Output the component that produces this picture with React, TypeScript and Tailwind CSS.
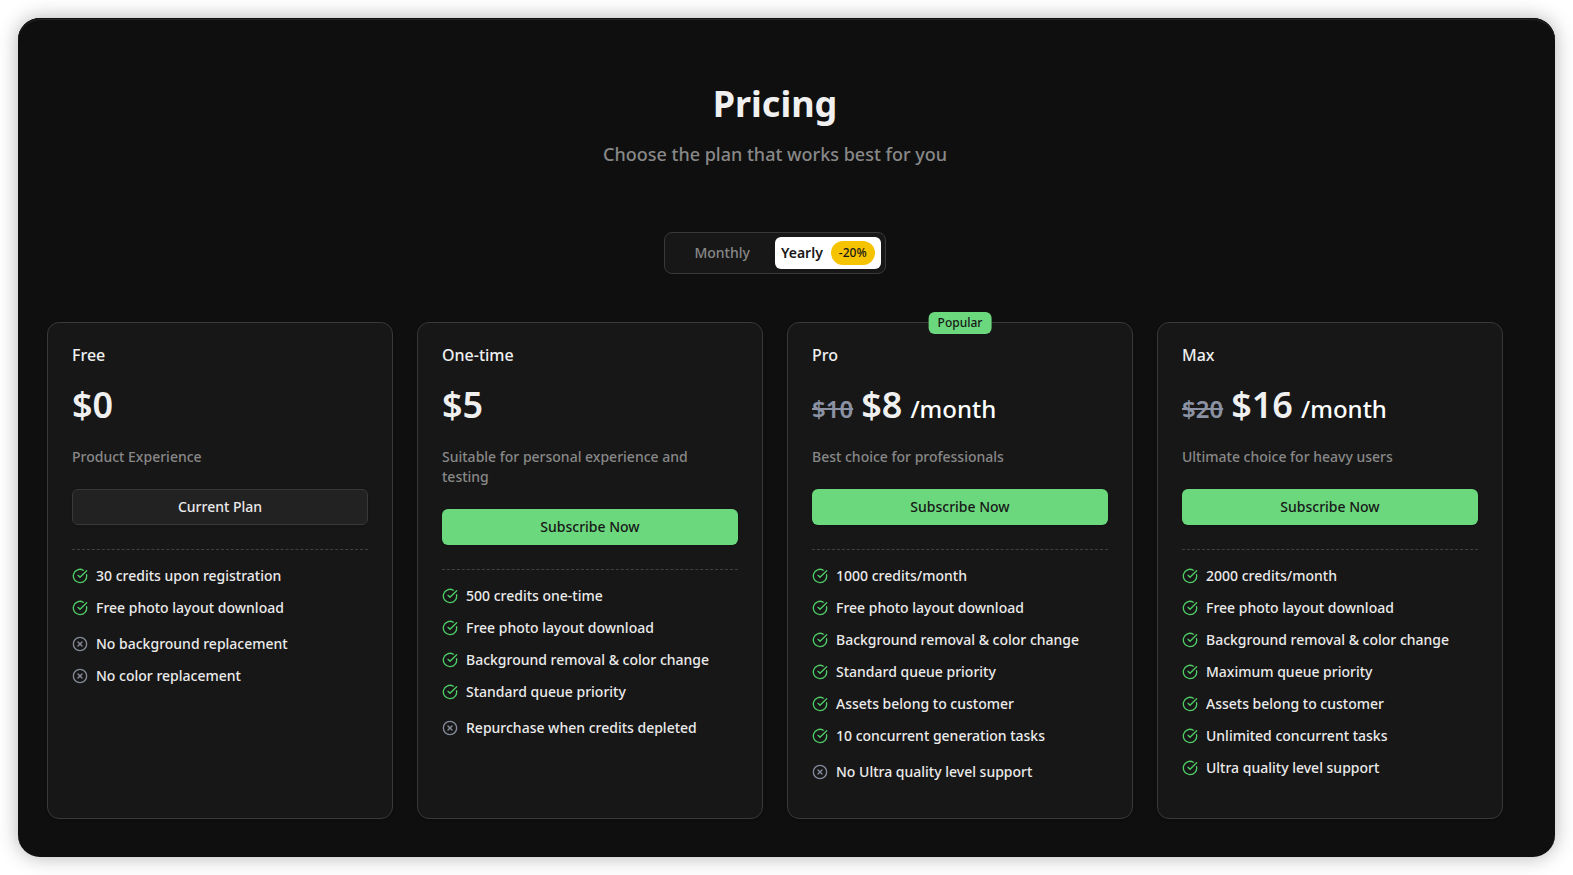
import { CircleCheckBig, CircleX } from "lucide-react";
import React, { useState } from "react";

interface Plan {
  name: string;
  price: string;
  oldPrice?: string;
  unit?: string;
  description: string;
  popular?: boolean;
  current?: boolean;
  features: string[];
  limits: string[];
}

const plans: Plan[] = [
  {
    name: "Free",
    price: "$0",
    description: "Product Experience",
    current: true,
    features: ["30 credits upon registration", "Free photo layout download"],
    limits: ["No background replacement", "No color replacement"],
  },
  {
    name: "One-time",
    price: "$5",
    description: "Suitable for personal experience and testing",
    features: [
      "500 credits one-time",
      "Free photo layout download",
      "Background removal & color change",
      "Standard queue priority",
    ],
    limits: ["Repurchase when credits depleted"],
  },
  {
    name: "Pro",
    price: "$8",
    oldPrice: "$10",
    unit: "/month",
    description: "Best choice for professionals",
    popular: true,
    features: [
      "1000 credits/month",
      "Free photo layout download",
      "Background removal & color change",
      "Standard queue priority",
      "Assets belong to customer",
      "10 concurrent generation tasks",
    ],
    limits: ["No Ultra quality level support"],
  },
  {
    name: "Max",
    price: "$16",
    oldPrice: "$20",
    unit: "/month",
    description: "Ultimate choice for heavy users",
    features: [
      "2000 credits/month",
      "Free photo layout download",
      "Background removal & color change",
      "Maximum queue priority",
      "Assets belong to customer",
      "Unlimited concurrent tasks",
      "Ultra quality level support",
    ],
    limits: [],
  },
];

const PlanCard = ({ plan, yearly }: { plan: Plan; yearly: boolean }) => {
  const discounted = yearly || !plan.oldPrice;

  return (
    <article className="relative flex flex-col rounded-xl border border-[#393939] bg-[#171717] p-6 pb-9 shadow-sm">
      {plan.popular && (
        <span className="absolute -top-[11px] left-1/2 -translate-x-1/2 rounded-md bg-[#6cd87e] px-[9px] py-[3px] text-xs leading-4 font-medium text-[#171717]">
          Popular
        </span>
      )}
      <h2 className="text-base leading-4 font-medium text-[#f0f0f0]">
        {plan.name}
      </h2>
      <p className="mt-5 flex items-baseline gap-2 text-2xl font-medium text-white">
        {yearly && plan.oldPrice && (
          <s className="font-semibold text-[#8b92a3]">{plan.oldPrice}</s>
        )}
        <span className="text-4xl leading-[44px] font-semibold text-[#f0f0f0]">
          {discounted ? plan.price : plan.oldPrice}
        </span>
        {plan.unit && <span>{plan.unit}</span>}
      </p>
      <p className="mt-5 text-sm leading-5 font-medium text-[#888888]">
        {plan.description}
      </p>
      {plan.current ? (
        <button className="mt-[22px] h-9 w-full rounded-md border border-[#393939] bg-[#222222] text-sm font-medium text-[#ebebeb] shadow-sm">
          Current Plan
        </button>
      ) : (
        <button className="mt-[22px] h-9 w-full rounded-md bg-[#6cd87e] text-sm font-medium text-[#171717] shadow-sm hover:bg-[#5fc971]">
          Subscribe Now
        </button>
      )}
      <hr className="mt-6 border-t border-dashed border-[#404040]" />
      <div className="mt-4 flex flex-col gap-4 text-sm leading-5 font-medium text-[#ebebeb]">
        <ul className="flex flex-col gap-3">
          {plan.features.map((feature) => (
            <li key={feature} className="flex items-center gap-2">
              <CircleCheckBig className="size-4 shrink-0 text-[#4fcb66]" />
              {feature}
            </li>
          ))}
        </ul>
        {plan.limits.length > 0 && (
          <ul className="flex flex-col gap-3">
            {plan.limits.map((limit) => (
              <li key={limit} className="flex items-center gap-2">
                <CircleX className="size-4 shrink-0 text-[#858b9b]" />
                {limit}
              </li>
            ))}
          </ul>
        )}
      </div>
    </article>
  );
};

const App: React.FC = () => {
  const [yearly, setYearly] = useState(true);

  return (
    <div className="flex min-h-screen bg-white p-[18px] font-['Noto_Sans',sans-serif]">
      <main className="w-full rounded-[22px] bg-[#0f0f0f] pt-[66px] pr-[52px] pb-[38px] pl-[29px] shadow-[inset_0_1px_0_#0f0f0f,inset_0_2px_0_#262626,0_0_20px_rgba(0,0,0,0.3)]">
        <header className="text-center">
          <h1 className="text-4xl leading-10 font-bold text-[#f0f0f0]">
            Pricing
          </h1>
          <p className="mt-4 text-lg leading-7 font-medium text-[#888888]">
            Choose the plan that works best for you
          </p>
        </header>

        <div className="mt-16 flex justify-center">
          <div className="grid grid-cols-2 rounded-lg border border-[#393939] bg-[#171717] p-1 text-sm">
            <button
              aria-pressed={!yearly}
              onClick={() => setYearly(false)}
              className={
                yearly
                  ? "h-8 rounded-md font-medium text-[#888888]"
                  : "h-8 rounded-md bg-white font-semibold text-[#171717]"
              }
            >
              Monthly
            </button>
            <button
              aria-pressed={yearly}
              onClick={() => setYearly(true)}
              className={
                yearly
                  ? "flex h-8 items-center gap-2 rounded-md bg-white px-1.5 font-semibold text-[#171717]"
                  : "flex h-8 items-center gap-2 rounded-md px-1.5 font-medium text-[#888888]"
              }
            >
              Yearly
              <span className="rounded-full bg-[#f6c300] px-2 py-1 text-xs leading-4 font-medium text-[#171717]">
                -20%
              </span>
            </button>
          </div>
        </div>

        <section className="mt-12 grid grid-cols-4 gap-6">
          {plans.map((plan) => (
            <PlanCard key={plan.name} plan={plan} yearly={yearly} />
          ))}
        </section>
      </main>
    </div>
  );
};

export default App;
